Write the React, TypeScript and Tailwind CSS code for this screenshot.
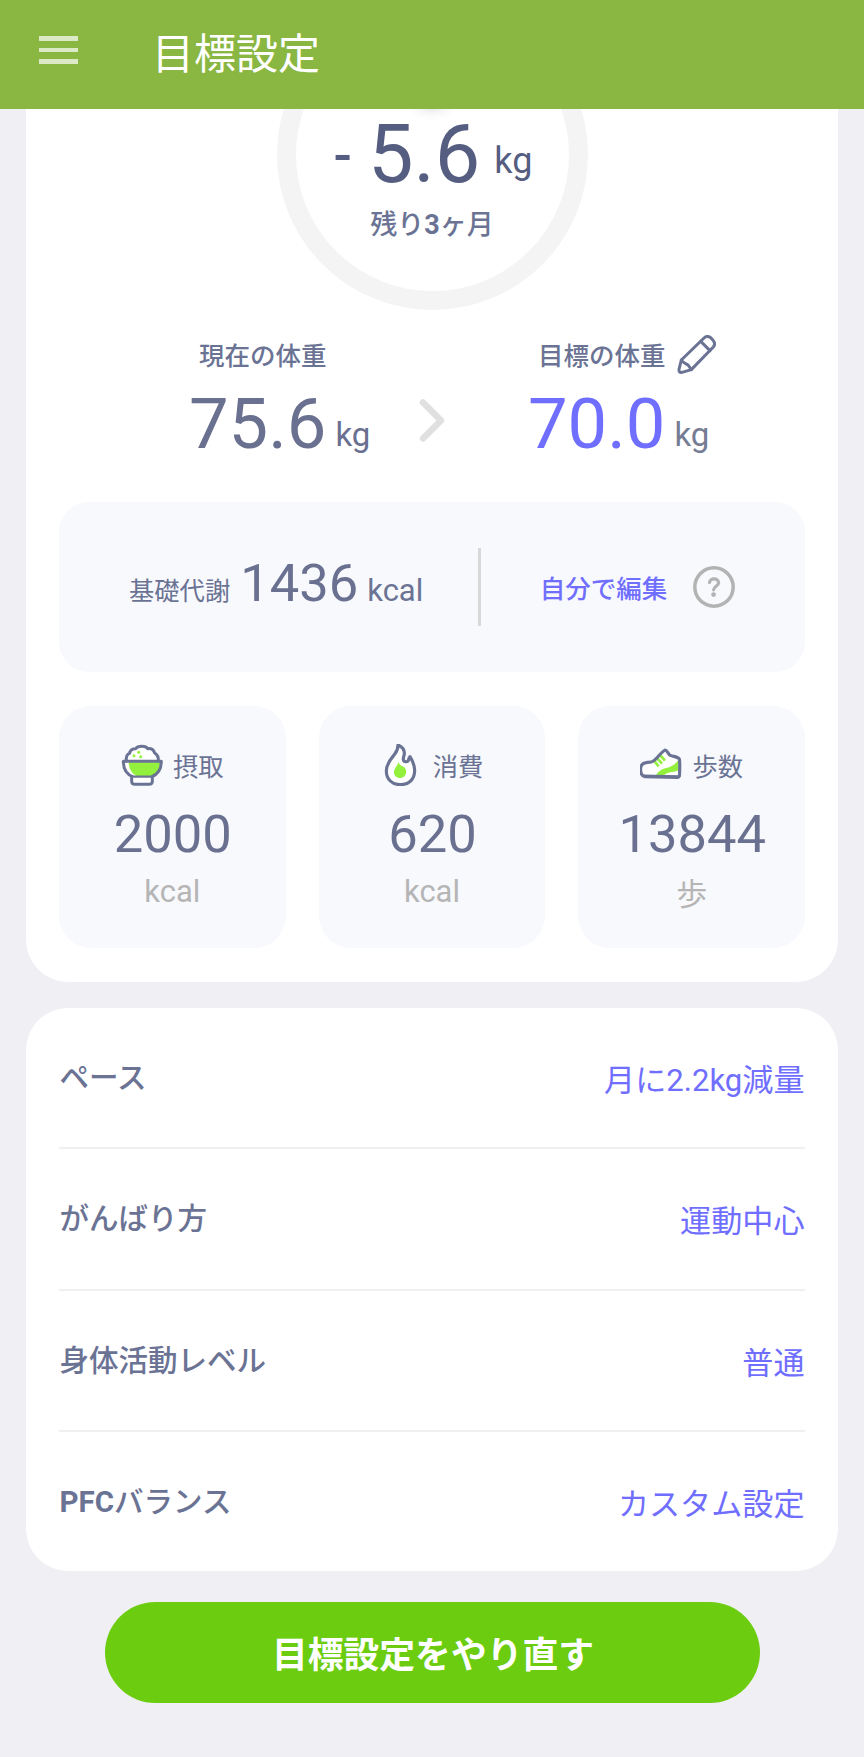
const RiceIcon = () => (
  <svg className="h-[42px] w-[42px]" viewBox="213 160 126 126" fill="none">
    <path
      d="M229 211C228 200 231 190 239 188C240 179 248 173 257 174C263 165 287 164 293 174C303 173 311 178 314 187C322 192 326 201 325 211Z"
      fill="#fff"
    />
    <path d="M220 212H334C334 236 322 252 304 259H250C231 252 220 236 220 212Z" fill="#fff" />
    <path d="M236 215H331C330 234 320 250 303 257H261C243 248 237 233 236 215Z" fill="#93f03c" />
    <g stroke="#6b7394" strokeWidth="9" strokeLinejoin="round" strokeLinecap="round">
      <path d="M229 211C228 200 231 190 239 188C240 179 248 173 257 174C263 165 287 164 293 174C303 173 311 178 314 187C322 192 326 201 325 211" />
      <path d="M220 212H334C334 236 322 252 304 259H250C231 252 220 236 220 212Z" />
      <path d="M245 261V273Q246 281 254 281H298Q306 281 307 273V261" fill="#fff" />
    </g>
    <circle cx="266" cy="185" r="4.5" fill="#93f03c" />
    <circle cx="252" cy="195" r="4.5" fill="#93f03c" />
    <circle cx="272" cy="198" r="4.5" fill="#93f03c" />
  </svg>
);

const FlameIcon = () => (
  <svg className="h-[42px] w-[42px]" viewBox="243 161 126 126" fill="none">
    <path
      d="M294 164C306 169 314 178 313 191C312 197 309 202 310 208C312 217 325 216 326 207C327 203 328 201 330 199C336 209 344 223 344 240C344 268 326 283 301 283C276 283 259 267 259 242C259 219 273 206 284 192C291 183 294 174 294 164Z"
      fill="#fff"
      stroke="#6b7394"
      strokeWidth="9.5"
      strokeLinejoin="round"
    />
    <path
      d="M296 214C298 226 306 226 313 231C323 240 320 262 301 263C286 263 279 251 283 239C286 230 294 224 296 214Z"
      fill="#93f03c"
    />
  </svg>
);

const ShoeIcon = () => (
  <svg className="h-[42px] w-[42px]" viewBox="243 163 126 126" fill="none">
    <path
      d="M318 181C325 181 327 194 334 197C343 201 356 200 361 208C363 212 362 254 361 260Q360 263 356 263L258 261C248 259 244 250 245 235C246 222 255 219 266 218C275 218 282 216 287 211C297 202 308 187 318 181Z"
      fill="#fff"
    />
    <path d="M291 256C299 244 307 238 321 235C337 232 349 224 358 211V242C349 248 340 246 329 249C322 251 317 255 314 257Z" fill="#93f03c" />
    <path
      d="M285 213L299 230M294 205L309 222M303 196L318 213"
      stroke="#93f03c"
      strokeWidth="8"
    />
    <path
      d="M318 181C325 181 327 194 334 197C343 201 356 200 361 208C363 212 362 254 361 260Q360 263 356 263L258 261C248 259 244 250 245 235C246 222 255 219 266 218C275 218 282 216 287 211C297 202 308 187 318 181Z"
      stroke="#6b7394"
      strokeWidth="9.5"
      strokeLinejoin="round"
    />
    <path d="M254 258L358 260" stroke="#6b7394" strokeWidth="7" />
  </svg>
);

const PencilIcon = () => (
  <svg className="-mt-[6px] ml-[11px] h-[39px] w-[39px]" viewBox="681 44 117 117" fill="none">
    <g stroke="#6b7394" strokeWidth="9" strokeLinejoin="round" strokeLinecap="round">
      <path d="M694 119L762 53Q772 44 783 53L789 60Q798 70 790 80L724 148L696 156Q686 158 687 147Z" />
      <path d="M752 63L780 91M694 119C698 128 712 131 715 135C718 139 721 143 724 148" />
    </g>
  </svg>
);

const stats = [
  { label: "摂取", value: "2000", unit: "kcal", icon: <RiceIcon /> },
  { label: "消費", value: "620", unit: "kcal", icon: <FlameIcon /> },
  { label: "歩数", value: "13844", unit: "歩", icon: <ShoeIcon /> },
];

const settings = [
  { label: "ペース", value: "月に2.2kg減量" },
  { label: "がんばり方", value: "運動中心" },
  { label: "身体活動レベル", value: "普通" },
  { label: <><b>PFC</b>バランス</>, value: "カスタム設定" },
];

const Weight = ({ label, value, color, unitColor, icon = null }) => (
  <div className="w-[195px] pt-[31px]">
    <div className="flex h-[30px] pl-[10px]">
      <p className="text-[25.5px] leading-[30px] font-medium whitespace-nowrap">{label}</p>
      {icon}
    </div>
    <div className="mt-[18px] flex">
      <p className={`text-[70.5px] leading-[70px] ${color}`}>{value}</p>
      <p className={`mt-[26px] ml-[9px] text-[33px] leading-[40px] ${unitColor}`}>kg</p>
    </div>
  </div>
);

const App = () => {
  return (
    <div className="min-h-[1757px] w-full bg-[#efeff4] font-['Roboto','Noto_Sans_CJK_JP',sans-serif] text-[#6b7394]">
      <header className="relative z-10 flex h-[109px] items-start bg-[#8ab642]">
        <button className="mt-[36px] ml-[39px] flex w-[39px] flex-col gap-[7px]">
          <span className="h-[4.5px] w-full bg-white/70" />
          <span className="h-[4.5px] w-full bg-white/70" />
          <span className="h-[4.5px] w-full bg-white/70" />
        </button>
        <h1 className="mt-[30px] ml-[74px] text-[42px] leading-[50px] text-white">目標設定</h1>
      </header>

      <main>
        <section className="mx-[26px] flow-root h-[873px] rounded-b-[42px] bg-white px-[33px]">
          <div className="relative mx-auto -mt-[110px] flex h-[311px] w-[311px] flex-col items-center rounded-full border-[19px] border-[#f4f4f4] pt-[97px]">
            <div className="absolute top-[40px] h-[46px] w-[46px] rounded-full bg-white shadow-[0_4px_14px_rgba(0,0,0,0.2)]" />
            <div className="flex pl-[2px] text-[#555e80]">
              <span className="mt-[11px] text-[54px] leading-[60px] font-medium">-</span>
              <span className="ml-[16px] text-[81px] leading-[80px]">5.6</span>
              <span className="mt-[26px] ml-[14px] text-[36px] leading-[40px]">kg</span>
            </div>
            <p className="mt-[15px] text-[27px] leading-[30px] font-medium">
              残り<b>3</b>ヶ月
            </p>
          </div>

          <div className="flex h-[192px] pl-[130px]">
            <Weight label="現在の体重" value="75.6" color="text-[#6a7090]" unitColor="text-[#6a7090]" />
            <svg className="mt-[88px] ml-[34px] h-[46px] w-[28px]" viewBox="0 0 28 46" fill="none">
              <path
                d="M5 4.5L23 22.5L5 40.5"
                stroke="#e0e0e0"
                strokeWidth="6.5"
                strokeLinecap="round"
                strokeLinejoin="round"
              />
            </svg>
            <div className="ml-[82px]">
              <Weight
                label="目標の体重"
                value="70.0"
                color="text-[#706eff]"
                unitColor="text-[#757c94]"
                icon={<PencilIcon />}
              />
            </div>
          </div>

          <div className="flex h-[170px] items-center rounded-[30px] bg-[#f8f9fd] pl-[70px]">
            <div className="mb-[9px] flex items-baseline">
              <span className="relative -top-px text-[25.3px] leading-[30px]">基礎代謝</span>
              <span className="ml-[10px] text-[52.5px] leading-[60px] text-[#6a7090]">1436</span>
              <span className="ml-[9px] text-[31px] leading-[36px]">kcal</span>
            </div>
            <div className="ml-[55px] h-[78px] w-[2.5px] bg-[#d8d8d8]" />
            <a className="mt-[3px] ml-[59px] text-[25.5px] leading-[30px] font-medium text-[#706eff]">
              自分で編集
            </a>
            <svg className="ml-[26px] h-[42px] w-[42px]" viewBox="0 0 42 42" fill="none" stroke="#b3b3b3">
              <circle cx="21" cy="21" r="19.2" strokeWidth="3.5" />
              <path
                d="M16.5 16.5C16.8 11.8 25.6 11.6 25.6 17C25.6 20 20.6 20.5 20.6 23.8"
                strokeWidth="3.2"
                strokeLinecap="round"
              />
              <circle cx="20.6" cy="28.6" r="2.4" fill="#b3b3b3" stroke="none" />
            </svg>
          </div>

          <div className="mt-[34px] flex gap-[33px]">
            {stats.map((stat) => (
              <div
                key={stat.value}
                className="flex h-[242px] flex-1 flex-col items-center rounded-[32px] bg-[#f8f9fd] pt-[38px]"
              >
                <div className="flex h-[42px] items-center gap-[10px]">
                  {stat.icon}
                  <span className="mt-[5px] text-[25.3px] leading-[30px]">{stat.label}</span>
                </div>
                <p className="mt-[18px] pl-[1px] text-[52.5px] leading-[60px] text-[#6a7090]">
                  {stat.value}
                </p>
                <p
                  className={`text-[31px] leading-[36px] text-[#b5b5b5] ${
                    stat.unit === "歩" ? "mt-[13px]" : "mt-[10px]"
                  }`}
                >
                  {stat.unit}
                </p>
              </div>
            ))}
          </div>
        </section>

        <section className="mx-[26px] mt-[25.5px] rounded-[42px] bg-white px-[33px]">
          {settings.map((item) => (
            <div
              key={item.value}
              className="flex h-[141.5px] items-center justify-between border-b-2 border-[#f0f0f0] last:h-[139px] last:border-b-0"
            >
              <span className="pt-[1px] pl-[0.5px] text-[29.5px] leading-[36px] font-medium">
                {item.label}
              </span>
              <span className="pt-[7px] pr-[0.5px] text-[31.1px] leading-[36px] text-[#706eff]">
                {item.value}
              </span>
            </div>
          ))}
        </section>

        <button className="mx-auto mt-[31px] flex h-[101px] w-[655px] items-center justify-center rounded-full bg-[#6ccc10] pt-[6px] pl-[2px] text-[35.8px] leading-[44px] font-bold text-white">
          目標設定をやり直す
        </button>
      </main>
    </div>
  );
};

export default App;
